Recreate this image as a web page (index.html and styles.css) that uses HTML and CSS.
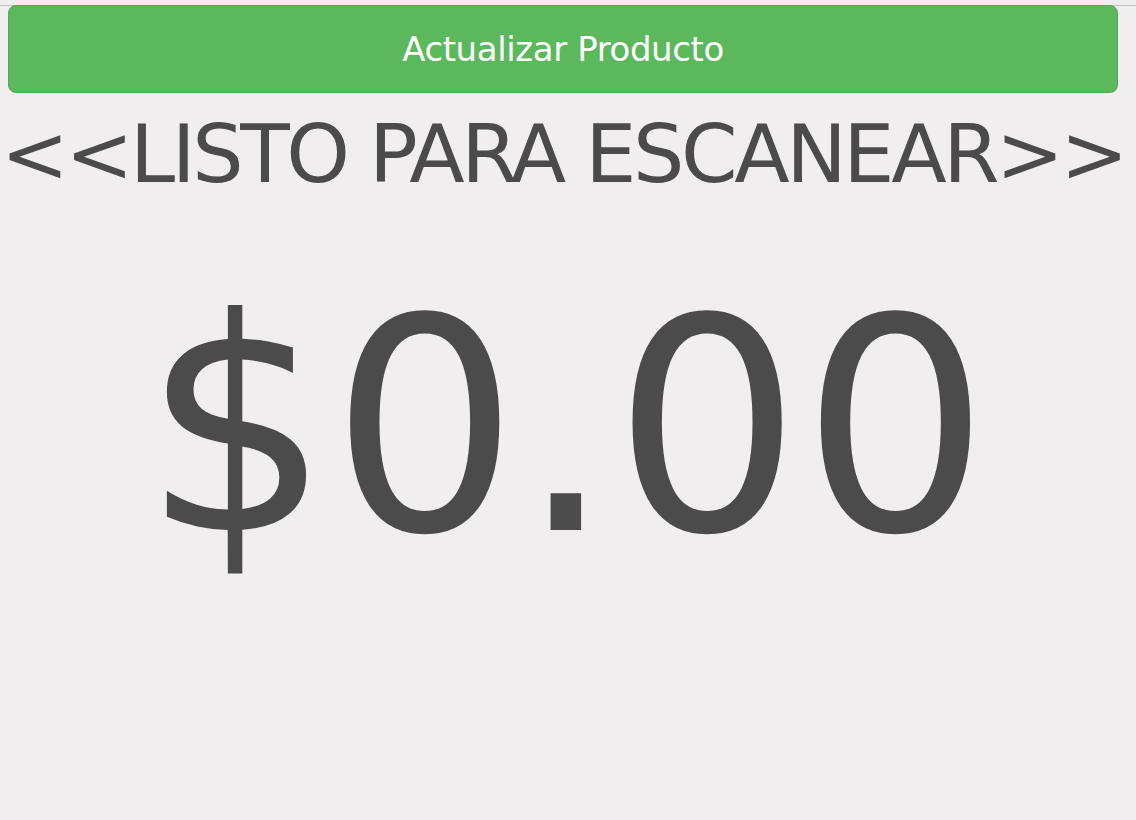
FILE: index.html
```html
<!DOCTYPE html>
<html>
<head>
<meta charset="utf-8">
<link rel="stylesheet" href="styles.css">
</head>
<body>
<div class="topline"></div>
<div class="page">
  <button class="btn-update">Actualizar Producto</button>
  <div class="status">&lt;&lt;LISTO PARA ESCANEAR&gt;&gt;</div>
  <div class="price">$0.00</div>
</div>
</body>
</html>
```
FILE: styles.css
```css
html, body {
  margin: 0;
  padding: 0;
  background: #f0eeef;
  font-family: "DejaVu Sans", Verdana, sans-serif;
  color: #4b4b4b;
  overflow: hidden;
}
.topline {
  height: 5px;
  border-bottom: 1px solid #c4c4c4;
}
.page {
  padding: 0 18px 0 8px;
  display: flex;
  flex-direction: column;
  align-items: stretch;
}
.btn-update {
  display: block;
  width: 100%;
  height: 88px;
  margin-top: -1px;
  background: #5cb85c;
  border: 1px solid #4cae4c;
  border-radius: 8px;
  color: #fff;
  font-family: "DejaVu Sans", Verdana, sans-serif;
  font-size: 34px;
  letter-spacing: -0.4px;
  padding: 0;
}
.status {
  margin: 11px -18px 0 -8px;
  padding-right: 10px;
  text-align: center;
  font-size: 81px;
  letter-spacing: -3.4px;
  line-height: 100px;
  white-space: nowrap;
}
.price {
  margin: 59px -18px 0 -8px;
  padding-right: 4px;
  text-align: center;
  font-size: 296px;
  line-height: 330px;
  white-space: nowrap;
}
```
